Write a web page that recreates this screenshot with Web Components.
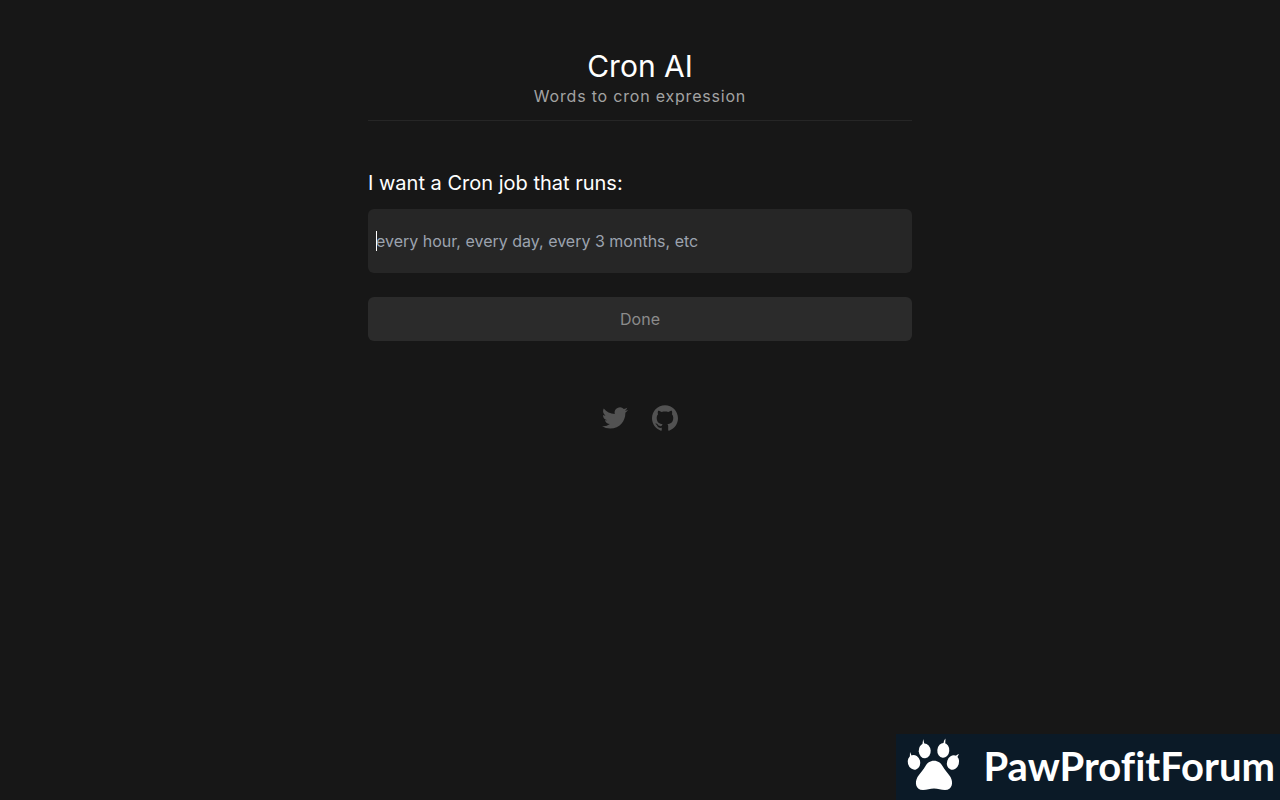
<!DOCTYPE html>
<html lang="en">
<head>
<meta charset="utf-8">
<meta name="viewport" content="width=device-width, initial-scale=1">
<title>Cron AI</title>
<style>
  html { background: #171717; color-scheme: dark; }
  body { margin: 0; color: #fff; font: 16px/24px Inter, "Liberation Sans", sans-serif; }
</style>
</head>
<body>
<cron-app></cron-app>
<forum-badge>PawProfitForum</forum-badge>

<script>
const define = (name, html, setup) => {
  const template = document.createElement('template');
  template.innerHTML = html;
  customElements.define(name, class extends HTMLElement {
    constructor() {
      super();
      this.attachShadow({ mode: 'open' }).append(template.content.cloneNode(true));
    }
    connectedCallback() { if (setup) setup(this.shadowRoot, this); }
  });
};

define('cron-header', `
<style>
  :host { display: block; text-align: center; padding-bottom: 12px; border-bottom: 1px solid #262626; }
  h1 { margin: 0; font-size: 30px; line-height: 36px; font-weight: 400; }
  p { margin: 0; color: #a3a3a3; letter-spacing: 0.05em; }
</style>
<header>
  <h1><slot name="title"></slot></h1>
  <p><slot></slot></p>
</header>`);

define('cron-form', `
<style>
  :host { display: block; }
  form { display: flex; flex-direction: column; }
  label { font-size: 20px; line-height: 28px; margin-bottom: 12px; }
  input, button { box-sizing: border-box; width: 100%; border: 0; border-radius: 6px; font: inherit; }
  .field { position: relative; }
  input { display: block; height: 64px; padding: 0 8px; background: #262626; color: #fff; outline: 0; caret-color: transparent; }
  input:not(:placeholder-shown) { caret-color: #fff; }
  input:placeholder-shown:focus + .caret { display: block; }
  .caret { display: none; position: absolute; left: 8px; top: 22px; width: 1px; height: 20px; background: #fff; pointer-events: none; }
  input::placeholder { color: #9ca3af; opacity: 1; }
  button { height: 44px; margin-top: 24px; background: #2b2b2b; color: #fff; }
  button:disabled { color: #8b8b8b; }
</style>
<form>
  <label for="prompt">I want a Cron job that runs:</label>
  <div class="field">
    <input id="prompt" type="text" autocomplete="off" placeholder="every hour, every day, every 3 months, etc">
    <span class="caret"></span>
  </div>
  <button type="submit" disabled>Done</button>
</form>`, root => {
  const input = root.querySelector('input');
  const button = root.querySelector('button');
  input.addEventListener('input', () => { button.disabled = !input.value.trim(); });
  root.querySelector('form').addEventListener('submit', e => e.preventDefault());
  input.focus();
});

define('social-links', `
<style>
  :host { display: block; }
  nav { display: flex; justify-content: center; gap: 24px; }
  a { display: block; color: #525252; }
  svg { display: block; width: 26px; height: 26px; fill: currentColor; }
</style>
<nav>
  <a href="#twitter" aria-label="Twitter"><svg viewBox="0 0 24 24"><path d="M23.953 4.57a10 10 0 01-2.825.775 4.958 4.958 0 002.163-2.723c-.951.555-2.005.959-3.127 1.184a4.92 4.92 0 00-8.384 4.482C7.69 8.095 4.067 6.13 1.64 3.162a4.822 4.822 0 00-.666 2.475c0 1.71.87 3.213 2.188 4.096a4.904 4.904 0 01-2.228-.616v.06a4.923 4.923 0 003.946 4.827 4.996 4.996 0 01-2.212.085 4.936 4.936 0 004.604 3.417 9.867 9.867 0 01-6.102 2.105c-.39 0-.779-.023-1.17-.067a13.995 13.995 0 007.557 2.209c9.053 0 13.998-7.496 13.998-13.985 0-.21 0-.42-.015-.63A9.935 9.935 0 0024 4.59z"/></svg></a>
  <a href="#github" aria-label="GitHub"><svg viewBox="0 0 24 24"><path d="M12 .297c-6.63 0-12 5.373-12 12 0 5.303 3.438 9.8 8.205 11.385.6.113.82-.258.82-.577 0-.285-.01-1.04-.015-2.04-3.338.724-4.042-1.61-4.042-1.61C4.422 18.07 3.633 17.7 3.633 17.7c-1.087-.744.084-.729.084-.729 1.205.084 1.838 1.236 1.838 1.236 1.07 1.835 2.809 1.305 3.495.998.108-.776.417-1.305.76-1.605-2.665-.3-5.466-1.332-5.466-5.93 0-1.31.465-2.38 1.235-3.22-.135-.303-.54-1.523.105-3.176 0 0 1.005-.322 3.3 1.23.96-.267 1.98-.399 3-.405 1.02.006 2.04.138 3 .405 2.28-1.552 3.285-1.23 3.285-1.23.645 1.653.24 2.873.12 3.176.765.84 1.23 1.91 1.23 3.22 0 4.61-2.805 5.625-5.475 5.92.42.36.81 1.096.81 2.22 0 1.606-.015 2.896-.015 3.286 0 .315.21.69.825.57C20.565 22.092 24 17.592 24 12.297c0-6.627-5.373-12-12-12"/></svg></a>
</nav>`);

define('forum-badge', `
<style>
  :host {
    position: fixed; right: 0; bottom: 0; display: flex; align-items: center; gap: 22px;
    box-sizing: border-box; height: 66px; padding: 0 5px 2px 9px; background: #0b1a27; color: #fff;
    font: 700 40px/48px Lato, sans-serif; font-variant-ligatures: none; white-space: nowrap;
  }
  svg { flex: none; width: 56px; height: 56px; fill: currentColor; }
</style>
<svg viewBox="0 -1 56 56" aria-hidden="true">
  <ellipse cx="19.700" cy="11.900" rx="6" ry="7.400" transform="rotate(-4 19.700 11.900)"/>
  <ellipse cx="38.300" cy="11.400" rx="6" ry="7.400" transform="rotate(5 38.300 11.400)"/>
  <ellipse cx="9" cy="23.300" rx="6.200" ry="7.400" transform="rotate(-16 9 23.300)"/>
  <ellipse cx="48" cy="23.500" rx="6" ry="7.400" transform="rotate(18 48 23.500)"/>
  <path d="M17.300 6L18.200 0L19.600 6ZM38.300 5C38.700 3 39 1 40.500 -.5L40.200 5ZM4.800 19L5 13L7 17.500ZM49.300 17.500C51 17 52 15.500 54 15L51.800 19Z"/>
  <path d="M29 21.700C25 21.700 22 24 20.500 27C18.500 31 15 34 12.500 38C9.500 43.500 10.500 51 18 51C22 51 25 49.500 29 49.500C33 49.500 36 51 40 51C47.500 51 48.500 43.500 45.500 38C43 34 39.500 31 37.500 27C36 24 33 21.700 29 21.700Z"/>
</svg>
<span><slot></slot></span>`);

define('cron-app', `
<style>
  :host { display: block; }
  main { box-sizing: border-box; max-width: 576px; margin: 0 auto; padding: 48px 16px; }
  cron-form { margin-top: 48px; }
  social-links { margin-top: 64px; }
</style>
<main>
  <cron-header><span slot="title">Cron AI</span>Words to cron expression</cron-header>
  <cron-form></cron-form>
  <social-links></social-links>
</main>`);
</script>
</body>
</html>
